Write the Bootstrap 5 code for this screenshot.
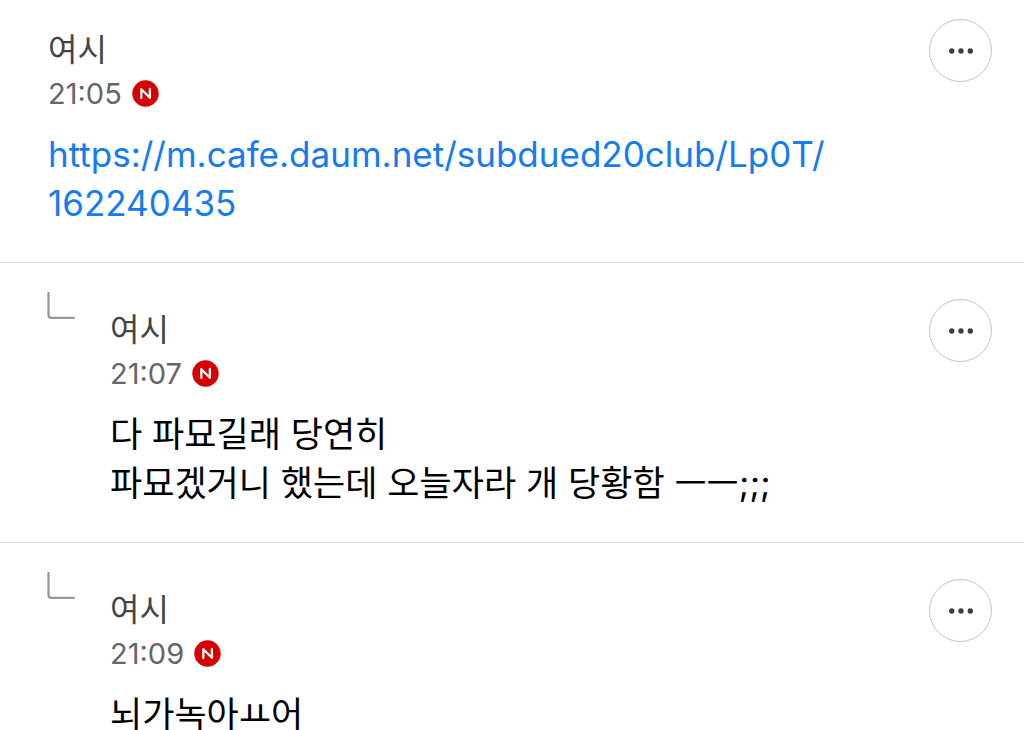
<!DOCTYPE html>
<html lang="ko">
<head>
<meta charset="utf-8">
<meta name="viewport" content="width=device-width, initial-scale=1">
<title>댓글</title>
<link href="https://cdn.jsdelivr.net/npm/bootstrap@5.3.0/dist/css/bootstrap.min.css" rel="stylesheet">
<script src="https://cdn.jsdelivr.net/npm/bootstrap@5.3.0/dist/js/bootstrap.bundle.min.js" defer></script>
<style>
body{font-family:Inter,"Noto Sans CJK KR",sans-serif;color:#000;background:#fff}
.comment{padding:18px 32px 34px 48px;border-bottom:1px solid #dedede}
.comment:last-child{border-bottom:0}
.reply{padding-left:47px}
.reply-mark{width:63px;margin-top:11px}
.author{font-size:32px;line-height:48px;color:#444;margin-top:8px}
.reply .author{margin-top:25px}
.meta{font-size:29px;line-height:40px;color:#666;gap:10px}
.new-icon{margin-bottom:2px}
.message{font-size:35px;line-height:49px;margin-top:16px}
.message a{color:#147cf0;overflow-wrap:anywhere}
.more{width:63px;height:63px;border:1px solid #c4c4c4;background:#fff;margin-top:1px}
.reply .more{margin-top:18px}
</style>
</head>
<body>
<svg class="d-none" aria-hidden="true">
<symbol id="new" viewBox="0 0 27 27"><circle cx="13.5" cy="13.5" r="13.2" fill="#d60000"/><path d="M9.3 18V9.2L17.9 17.8V9" fill="none" stroke="#fff" stroke-width="2.3" stroke-linecap="round" stroke-linejoin="round"/></symbol>
<symbol id="dots" viewBox="0 0 26 6"><circle cx="3.7" cy="3" r="2.7"/><circle cx="13" cy="3" r="2.7"/><circle cx="22.3" cy="3" r="2.7"/></symbol>
<symbol id="branch" viewBox="0 0 29 29"><path d="M1.5 1V23Q1.5 25.8 4.3 25.8H27" fill="none" stroke="#999" stroke-width="2.3" stroke-linecap="round"/></symbol>
</svg>
<main>
<article class="comment d-flex align-items-start">
<div class="flex-grow-1">
<div class="author">여시</div>
<div class="meta d-flex align-items-center"><time datetime="21:05">21:05</time><svg class="new-icon" width="27" height="27" role="img" aria-label="새 댓글"><use href="#new"/></svg></div>
<div class="message"><a class="text-decoration-none" href="https://m.cafe.daum.net/subdued20club/Lp0T/162240435">https://m.cafe.daum.net/subdued20club/Lp0T/<wbr>162240435</a></div>
</div>
<button type="button" class="more rounded-circle p-0 flex-shrink-0 d-flex align-items-center justify-content-center" aria-label="더보기"><svg width="26" height="6" fill="#3c3c3c"><use href="#dots"/></svg></button>
</article>
<article class="comment reply d-flex align-items-start">
<div class="reply-mark flex-shrink-0"><svg class="d-block" width="29" height="29"><use href="#branch"/></svg></div>
<div class="flex-grow-1">
<div class="author">여시</div>
<div class="meta d-flex align-items-center"><time datetime="21:07">21:07</time><svg class="new-icon" width="27" height="27" role="img" aria-label="새 댓글"><use href="#new"/></svg></div>
<div class="message">다 파묘길래 당연히<br>파묘겠거니 했는데 오늘자라 개 당황함 ㅡㅡ;;;</div>
</div>
<button type="button" class="more rounded-circle p-0 flex-shrink-0 d-flex align-items-center justify-content-center" aria-label="더보기"><svg width="26" height="6" fill="#3c3c3c"><use href="#dots"/></svg></button>
</article>
<article class="comment reply d-flex align-items-start pb-0">
<div class="reply-mark flex-shrink-0"><svg class="d-block" width="29" height="29"><use href="#branch"/></svg></div>
<div class="flex-grow-1">
<div class="author">여시</div>
<div class="meta d-flex align-items-center"><time datetime="21:09">21:09</time><svg class="new-icon" width="27" height="27" role="img" aria-label="새 댓글"><use href="#new"/></svg></div>
<div class="message">뇌가녹아ㅛ어</div>
</div>
<button type="button" class="more rounded-circle p-0 flex-shrink-0 d-flex align-items-center justify-content-center" aria-label="더보기"><svg width="26" height="6" fill="#3c3c3c"><use href="#dots"/></svg></button>
</article>
</main>
</body>
</html>
